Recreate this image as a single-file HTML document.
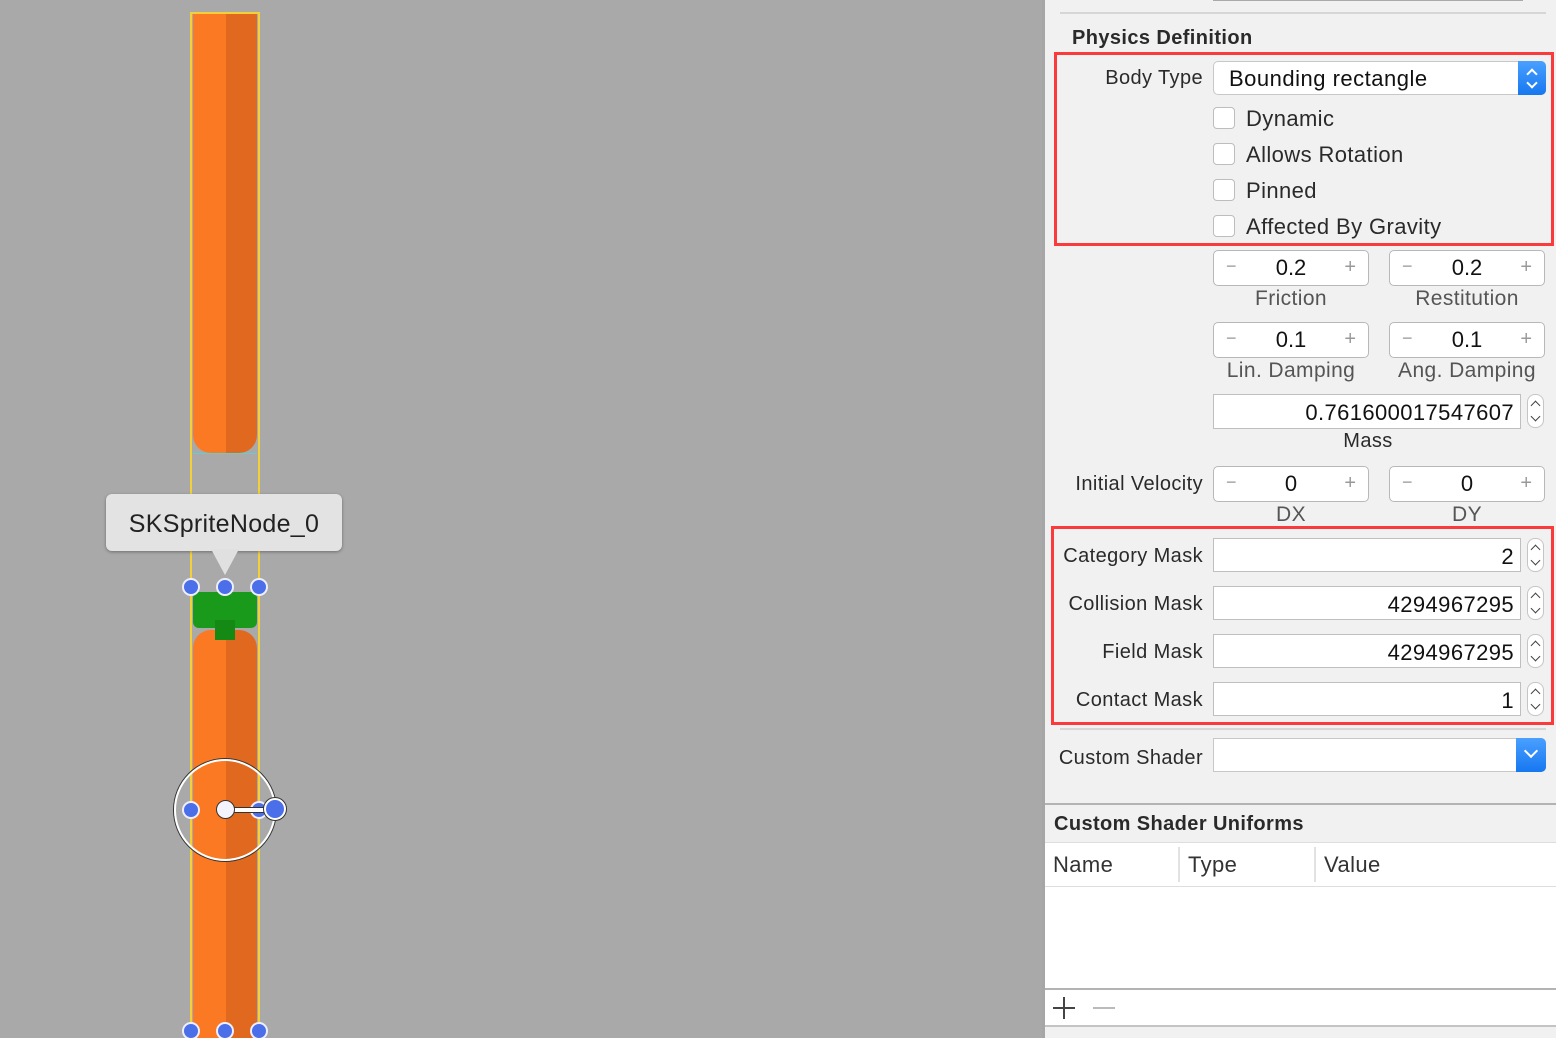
<!DOCTYPE html>
<html style="overflow:hidden;height:1038px"><head><style>
body{margin:0;width:1556px;height:1038px;overflow:hidden;background:#a9a9a9;font-family:"Liberation Sans",sans-serif;position:relative}
.a{position:absolute}
.lbl{position:absolute;font-size:20px;color:#2a2a2a;white-space:nowrap;letter-spacing:0.4px}
.r{text-align:right}
.c{text-align:center}
.cb{position:absolute;width:20px;height:20px;border:1px solid #bdbdbd;border-radius:4px;background:#fff;left:1213px}
.st{position:absolute;width:154px;height:34px;border:1px solid #b8b8b8;border-radius:5px;background:#fff;font-size:22px;color:#111}
.st .m{position:absolute;left:12px;top:5px;color:#999;font-size:18px}
.st .p{position:absolute;right:12px;top:5px;color:#999;font-size:20px}
.st .v{position:absolute;left:0;right:0;text-align:center;top:4px}
.tf{position:absolute;left:1213px;width:308px;height:34px;border:1px solid #bfbfbf;background:#fff;font-size:22px;color:#111;text-align:right;box-sizing:border-box;padding:5px 6px 0 0;letter-spacing:0.4px}
.sp{position:absolute;left:1527px;width:17px;height:34px;border:1px solid #c5c5c5;border-radius:8px;background:#fff;box-sizing:border-box}
.sp:before{content:"";position:absolute;left:4px;top:7px;width:6px;height:6px;border-left:1.5px solid #444;border-top:1.5px solid #444;transform:rotate(45deg)}
.sp:after{content:"";position:absolute;left:4px;top:18px;width:6px;height:6px;border-right:1.5px solid #444;border-bottom:1.5px solid #444;transform:rotate(45deg)}
.h{position:absolute;width:14px;height:14px;border-radius:50%;background:#4a6fe8;border:2px solid #eef}
</style></head><body>
<div class="a" style="left:193px;top:13px;width:33px;height:440px;background:#fb7922;border-radius:0 0 0 18px"></div>
<div class="a" style="left:226px;top:13px;width:31px;height:440px;background:#e1691f;border-radius:0 0 18px 0"></div>
<div class="a" style="left:193px;top:453px;width:64px;height:6px;border-top:1px solid #6cc;"></div>
<div class="a" style="left:193px;top:630px;width:33px;height:408px;background:#fb7922;border-radius:18px 0 0 0"></div>
<div class="a" style="left:226px;top:630px;width:31px;height:408px;background:#e1691f;border-radius:0 18px 0 0"></div>
<div class="a" style="left:193px;top:592px;width:64px;height:36px;background:#1a9a1a;border-radius:6px"></div>
<div class="a" style="left:215px;top:620px;width:20px;height:20px;background:#148a14"></div>
<div class="a" style="left:190px;top:12px;width:2px;height:1026px;background:#f3cf3a"></div>
<div class="a" style="left:258px;top:12px;width:2px;height:1026px;background:#f3cf3a"></div>
<div class="a" style="left:190px;top:12px;width:70px;height:2px;background:#f3cf3a"></div>
<div class="a" style="left:106px;top:494px;width:236px;height:57px;background:#e3e3e3;border-radius:6px;box-shadow:0 1px 3px rgba(0,0,0,.35);font-size:25px;color:#222;text-align:center;line-height:60px;letter-spacing:0.3px">SKSpriteNode_0</div>
<div class="a" style="left:211px;top:549px;width:0;height:0;border-left:14px solid transparent;border-right:14px solid transparent;border-top:26px solid #e0e0e0"></div>
<div class="h" style="left:182px;top:578px"></div><div class="h" style="left:216px;top:578px"></div><div class="h" style="left:250px;top:578px"></div>
<div class="h" style="left:182px;top:1022px"></div><div class="h" style="left:216px;top:1022px"></div><div class="h" style="left:250px;top:1022px"></div>
<div class="a" style="left:174px;top:759px;width:98px;height:98px;border-radius:50%;border:2px solid #fff;box-shadow:0 0 0 1px #333"></div>
<div class="h" style="left:182px;top:801px"></div>
<div class="h" style="left:250px;top:801px"></div>
<div class="a" style="left:226px;top:807px;width:46px;height:4px;background:#fff;border:1px solid #333"></div>
<div class="a" style="left:216px;top:800px;width:17px;height:17px;border-radius:50%;background:#f4f4ff;border:1px solid #333"></div>
<div class="a" style="left:264px;top:798px;width:18px;height:18px;border-radius:50%;background:#4a6fe8;border:2px solid #fff;box-shadow:0 0 0 1px #333"></div>

<div class="a" style="left:1042px;top:0;width:514px;height:1038px;background:#f1f1f1;border-left:3px solid #a6a6a6"></div>
<div class="a" style="left:1213px;top:0;width:310px;height:1px;background:#aaa"></div>
<div class="a" style="left:1060px;top:12px;width:486px;height:2px;background:#d6d6d6"></div>
<div class="lbl" style="left:1072px;top:27px;font-weight:bold">Physics Definition</div>
<div class="a" style="left:1054px;top:52px;width:500px;height:194px;border:3px solid #fb3b3b;box-sizing:border-box"></div>
<div class="lbl r" style="left:1060px;width:143px;top:67px">Body Type</div>
<div class="a" style="left:1213px;top:61px;width:333px;height:34px;background:#fff;border:1px solid #c8c8c8;border-radius:5px;box-sizing:border-box;font-size:22px;color:#111;padding:4px 0 0 15px;letter-spacing:0.5px">Bounding rectangle</div>
<div class="a" style="left:1518px;top:61px;width:28px;height:34px;background:linear-gradient(#4aa0ff,#1677f0);border-radius:0 5px 5px 0"></div>
<div class="a" style="left:1528px;top:70px;width:6px;height:6px;border-left:2px solid #fff;border-top:2px solid #fff;transform:rotate(45deg)"></div>
<div class="a" style="left:1528px;top:79px;width:6px;height:6px;border-right:2px solid #fff;border-bottom:2px solid #fff;transform:rotate(45deg)"></div>
<div class="cb" style="top:107px"></div><div class="lbl" style="left:1246px;top:106px;font-size:22px">Dynamic</div>
<div class="cb" style="top:143px"></div><div class="lbl" style="left:1246px;top:142px;font-size:22px">Allows Rotation</div>
<div class="cb" style="top:179px"></div><div class="lbl" style="left:1246px;top:178px;font-size:22px">Pinned</div>
<div class="cb" style="top:215px"></div><div class="lbl" style="left:1246px;top:214px;font-size:22px">Affected By Gravity</div>

<div class="st" style="left:1213px;top:250px"><span class="m">−</span><span class="v">0.2</span><span class="p">+</span></div>
<div class="st" style="left:1389px;top:250px"><span class="m">−</span><span class="v">0.2</span><span class="p">+</span></div>
<div class="lbl c" style="left:1203px;width:176px;top:287px;font-size:21px;color:#555">Friction</div>
<div class="lbl c" style="left:1379px;width:176px;top:287px;font-size:21px;color:#555">Restitution</div>
<div class="st" style="left:1213px;top:322px"><span class="m">−</span><span class="v">0.1</span><span class="p">+</span></div>
<div class="st" style="left:1389px;top:322px"><span class="m">−</span><span class="v">0.1</span><span class="p">+</span></div>
<div class="lbl c" style="left:1203px;width:176px;top:359px;font-size:21px;color:#555">Lin. Damping</div>
<div class="lbl c" style="left:1379px;width:176px;top:359px;font-size:21px;color:#555">Ang. Damping</div>
<div class="tf" style="top:394px;height:35px">0.761600017547607</div>
<div class="sp" style="top:394px"></div>
<div class="lbl c" style="left:1213px;width:310px;top:430px">Mass</div>
<div class="lbl r" style="left:1050px;width:153px;top:473px">Initial Velocity</div>
<div class="st" style="left:1213px;top:466px"><span class="m">−</span><span class="v">0</span><span class="p">+</span></div>
<div class="st" style="left:1389px;top:466px"><span class="m">−</span><span class="v">0</span><span class="p">+</span></div>
<div class="lbl c" style="left:1213px;width:156px;top:503px;font-size:21px;color:#555">DX</div>
<div class="lbl c" style="left:1389px;width:156px;top:503px;font-size:21px;color:#555">DY</div>

<div class="a" style="left:1051px;top:526px;width:503px;height:199px;border:3px solid #fb3b3b;box-sizing:border-box"></div>
<div class="lbl r" style="left:1050px;width:153px;top:545px">Category Mask</div>
<div class="tf" style="top:538px">2</div><div class="sp" style="top:538px"></div>
<div class="lbl r" style="left:1050px;width:153px;top:593px">Collision Mask</div>
<div class="tf" style="top:586px">4294967295</div><div class="sp" style="top:586px"></div>
<div class="lbl r" style="left:1050px;width:153px;top:641px">Field Mask</div>
<div class="tf" style="top:634px">4294967295</div><div class="sp" style="top:634px"></div>
<div class="lbl r" style="left:1050px;width:153px;top:689px">Contact Mask</div>
<div class="tf" style="top:682px">1</div><div class="sp" style="top:682px"></div>

<div class="a" style="left:1060px;top:728px;width:486px;height:2px;background:#d6d6d6"></div>
<div class="lbl r" style="left:1040px;width:163px;top:747px">Custom Shader</div>
<div class="a" style="left:1213px;top:738px;width:333px;height:34px;background:#fff;border:1px solid #c8c8c8;border-radius:0 5px 5px 0;box-sizing:border-box"></div>
<div class="a" style="left:1516px;top:738px;width:30px;height:34px;background:linear-gradient(#4aa0ff,#1677f0);border-radius:0 5px 5px 0"></div>
<div class="a" style="left:1526px;top:746px;width:8px;height:8px;border-right:2px solid #fff;border-bottom:2px solid #fff;transform:rotate(45deg)"></div>

<div class="a" style="left:1045px;top:803px;width:511px;height:2px;background:#b3b3b3"></div>
<div class="lbl" style="left:1054px;top:813px;font-weight:bold">Custom Shader Uniforms</div>
<div class="a" style="left:1045px;top:842px;width:511px;height:146px;background:#fff;border-top:1px solid #ddd"></div>
<div class="a" style="left:1045px;top:886px;width:511px;height:1px;background:#ddd"></div>
<div class="a" style="left:1178px;top:847px;width:2px;height:35px;background:#e2e2e2"></div>
<div class="a" style="left:1314px;top:847px;width:2px;height:35px;background:#e2e2e2"></div>
<div class="lbl" style="left:1053px;top:852px;font-size:22px;color:#333">Name</div>
<div class="lbl" style="left:1188px;top:852px;font-size:22px;color:#333">Type</div>
<div class="lbl" style="left:1324px;top:852px;font-size:22px;color:#333">Value</div>
<div class="a" style="left:1045px;top:988px;width:511px;height:2px;background:#b3b3b3"></div>
<div class="a" style="left:1045px;top:990px;width:511px;height:35px;background:#fff"></div>
<div class="a" style="left:1053px;top:1007px;width:22px;height:2px;background:#444"></div>
<div class="a" style="left:1063px;top:997px;width:2px;height:22px;background:#444"></div>
<div class="a" style="left:1093px;top:1007px;width:22px;height:2px;background:#bbb"></div>
<div class="a" style="left:1045px;top:1025px;width:511px;height:2px;background:#c4c4c4"></div>
</body></html>
